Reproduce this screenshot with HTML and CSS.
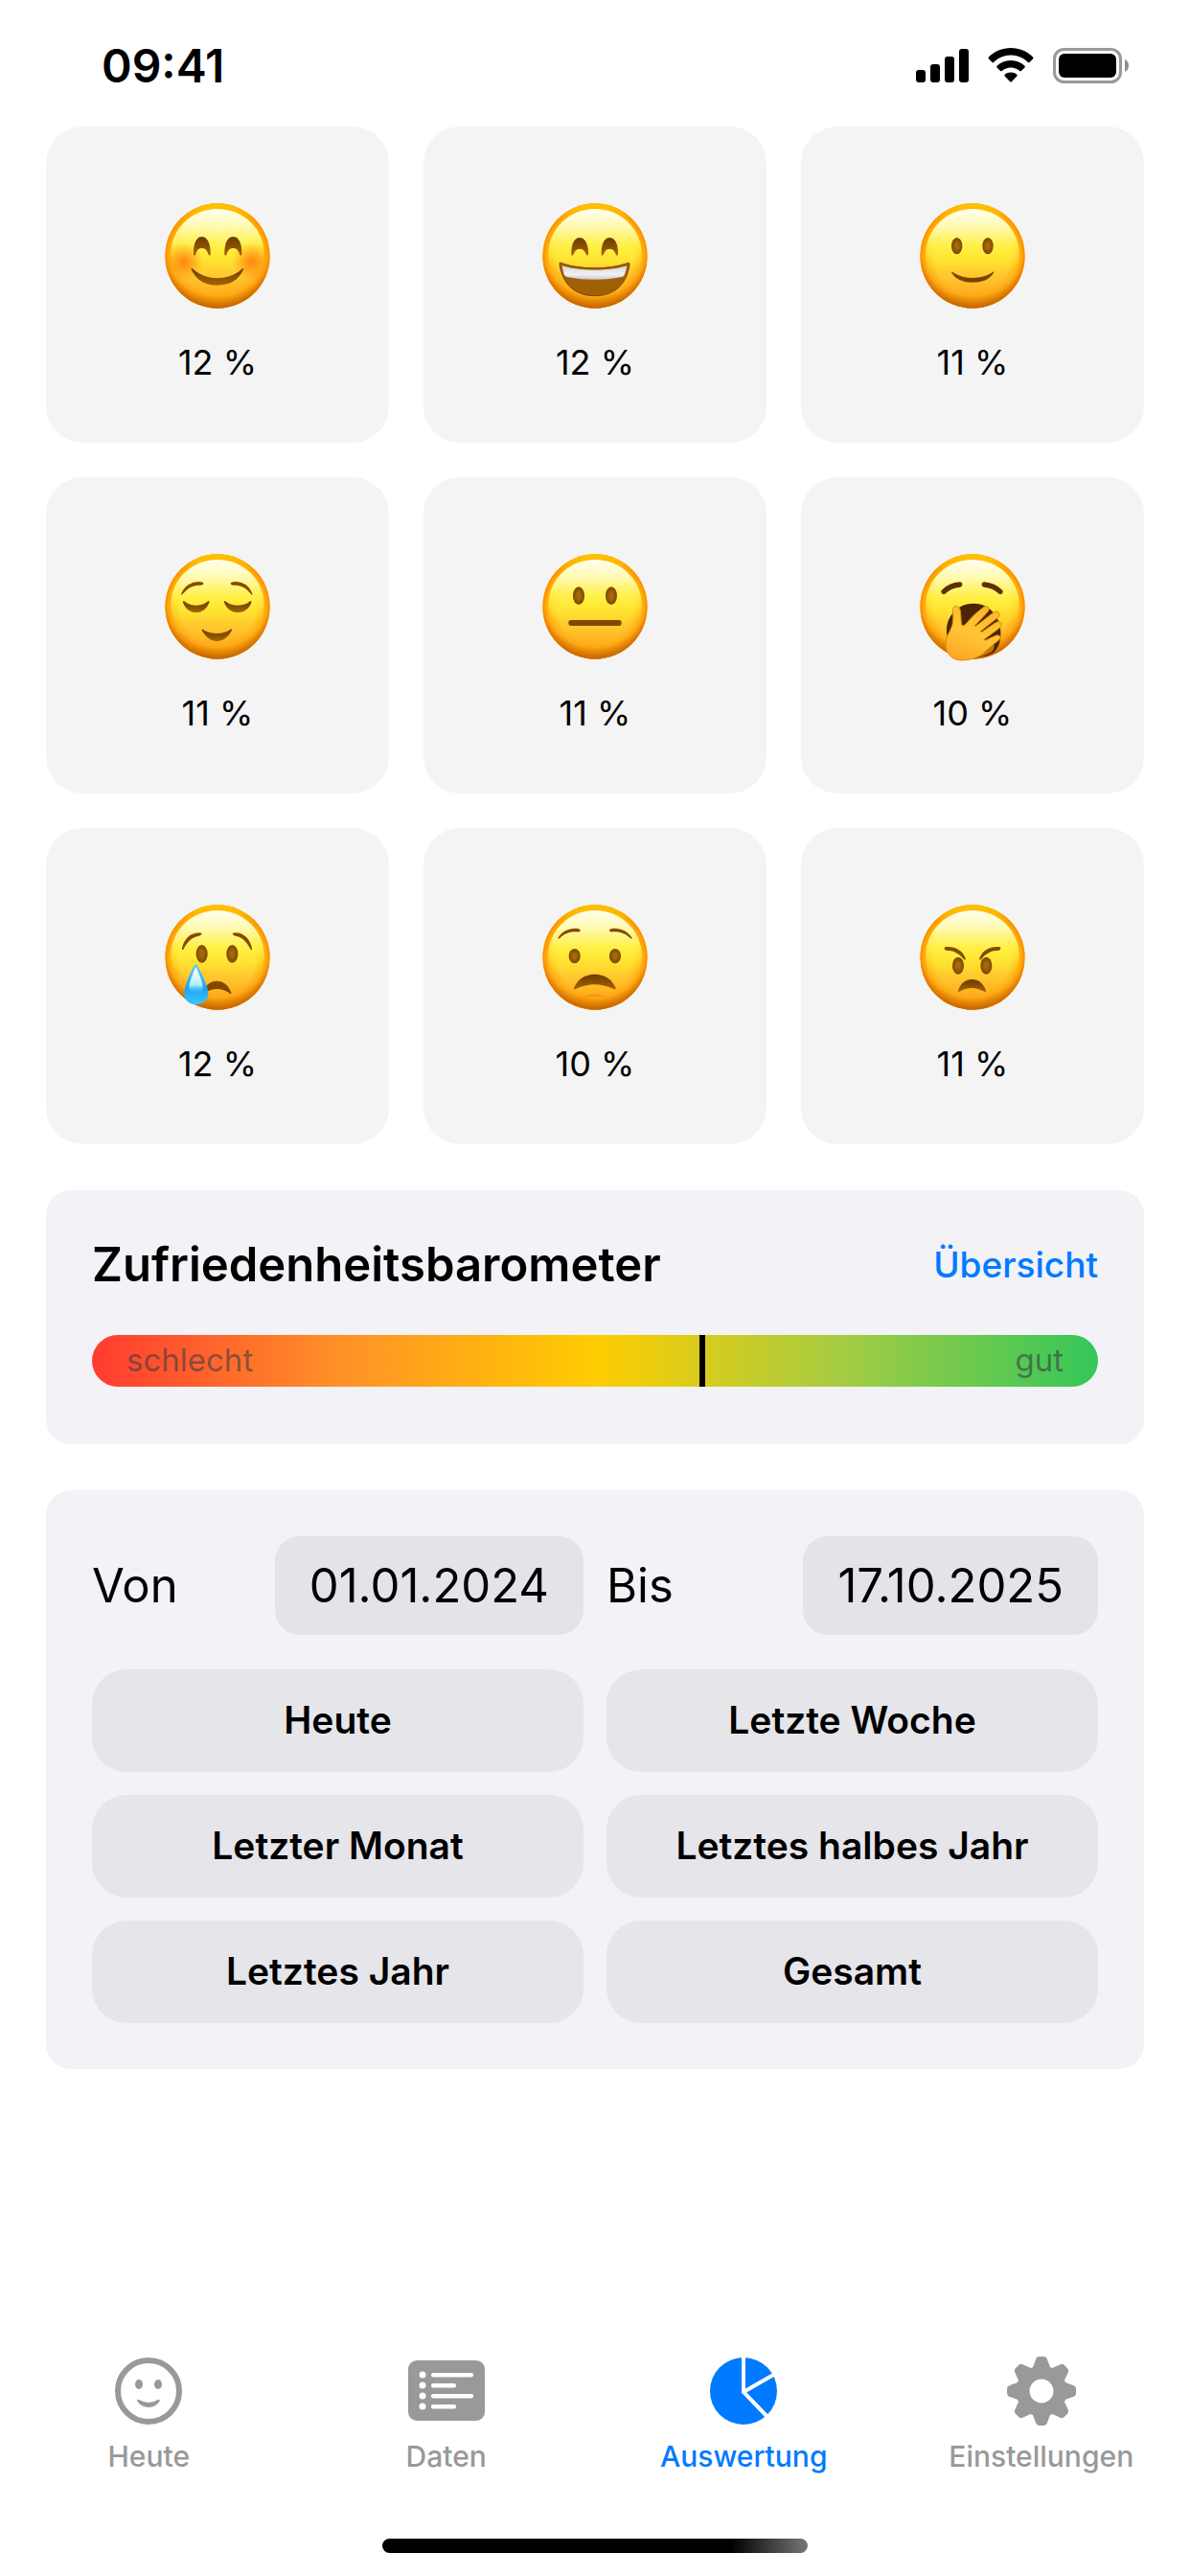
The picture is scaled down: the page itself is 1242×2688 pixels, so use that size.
FILE: index.html
```html
<!DOCTYPE html>
<html lang="de">
<head>
    <meta charset="UTF-8">
    <meta name="viewport" content="width=device-width, initial-scale=1.0">
    <title>Auswertung</title>
    <link rel="stylesheet" href="styles.css">
</head>
<body>
    <!-- Gemeinsame Verläufe und das leere Gesicht -->
    <svg class="vorlagen" width="0" height="0" aria-hidden="true">
        <defs>
            <linearGradient id="haut" x1="0" y1="0" x2="0" y2="1">
                <stop offset="0" stop-color="#ffd400"/>
                <stop offset=".3" stop-color="#ffe01c"/>
                <stop offset=".5" stop-color="#ffe32c"/>
                <stop offset=".7" stop-color="#ffc62e"/>
                <stop offset=".86" stop-color="#ffae1b"/>
                <stop offset="1" stop-color="#f59a10"/>
            </linearGradient>
            <radialGradient id="rand" cx=".5" cy=".5" r=".5">
                <stop offset=".72" stop-color="#ff9500" stop-opacity="0"/>
                <stop offset=".9" stop-color="#ff9500" stop-opacity=".6"/>
                <stop offset="1" stop-color="#fb8c00"/>
            </radialGradient>
            <radialGradient id="schatten" cx=".5" cy=".38" r=".62">
                <stop offset=".82" stop-color="#b85e00" stop-opacity="0"/>
                <stop offset="1" stop-color="#b85e00" stop-opacity=".85"/>
            </radialGradient>
            <linearGradient id="kante" x1="0" y1="0" x2="0" y2="1">
                <stop offset="0" stop-color="#ffc400"/>
                <stop offset=".16" stop-color="#ffd000" stop-opacity="0"/>
            </linearGradient>
            <linearGradient id="glanz" x1="0" y1="0" x2="0" y2="1">
                <stop offset="0" stop-color="#fffef0"/>
                <stop offset=".2" stop-color="#fffab0"/>
                <stop offset=".42" stop-color="#fff24a" stop-opacity=".85"/>
                <stop offset=".7" stop-color="#ffe52e" stop-opacity="0"/>
            </linearGradient>
            <radialGradient id="wange">
                <stop offset="0" stop-color="#ff7a0c" stop-opacity=".9"/>
                <stop offset=".4" stop-color="#ff8a10" stop-opacity=".65"/>
                <stop offset="1" stop-color="#ff9a10" stop-opacity="0"/>
            </radialGradient>
            <linearGradient id="braun" x1="0" y1="0" x2="0" y2="1">
                <stop offset="0" stop-color="#6b3b00"/>
                <stop offset="1" stop-color="#a56405"/>
            </linearGradient>
            <radialGradient id="pupille">
                <stop offset=".3" stop-color="#a5680a"/>
                <stop offset="1" stop-color="#7a4500"/>
            </radialGradient>
            <linearGradient id="zaehne" x1="0" y1="0" x2="0" y2="1">
                <stop offset="0" stop-color="#d4d4da"/>
                <stop offset=".6" stop-color="#f2f2f6"/>
                <stop offset="1" stop-color="#c9c9d0"/>
            </linearGradient>
            <linearGradient id="hand" x1=".7" y1="0" x2=".3" y2="1">
                <stop offset="0" stop-color="#ffb52c"/>
                <stop offset=".5" stop-color="#ffc633"/>
                <stop offset="1" stop-color="#ffa726"/>
            </linearGradient>
            <linearGradient id="traene" x1="0" y1="0" x2="0" y2="1">
                <stop offset="0" stop-color="#5ccbf2"/>
                <stop offset=".6" stop-color="#1ea4f2"/>
                <stop offset="1" stop-color="#3cc4ff"/>
            </linearGradient>
            <linearGradient id="traene-glanz" x1="0" y1="0" x2="0" y2="1">
                <stop offset="0" stop-color="#ffffff"/>
                <stop offset=".65" stop-color="#b4eeff"/>
                <stop offset="1" stop-color="#1fb0ff" stop-opacity="0"/>
            </linearGradient>
            <symbol id="gesicht" viewBox="-168 -168 336 336">
                <circle r="164" fill="url(#haut)"/>
                <circle r="164" fill="url(#rand)"/>
                <circle r="164" fill="url(#schatten)"/>
                <circle r="164" fill="url(#kante)"/>
                <ellipse cy="-6" rx="146" ry="141" fill="url(#glanz)"/>
            </symbol>
        </defs>
    </svg>

    <header class="statusleiste">
        <time class="uhrzeit">09:41</time>
        <div class="status-symbole">
            <svg width="55" height="35" viewBox="0 0 55 35">
                <rect x="0" y="22" width="10" height="13" rx="3"/>
                <rect x="15" y="16" width="10" height="19" rx="3"/>
                <rect x="30" y="8" width="10" height="27" rx="3"/>
                <rect x="45" y="0" width="10" height="35" rx="3"/>
            </svg>
            <svg width="48" height="36" viewBox="0 0 48 36">
                <path d="M24 0C33 0 41 3.500 47 9.500Q48 10.500 47 11.500L43.500 15Q42.700 15.700 41.900 15C37 10.300 31 7.500 24 7.500S11 10.300 6.100 15Q5.300 15.700 4.500 15L1 11.500Q0 10.500 1 9.500C7 3.500 15 0 24 0Z"/>
                <path d="M24 13C29.500 13 34.500 15.200 38.500 18.800Q39.300 19.600 38.500 20.500L34.900 24Q34.100 24.700 33.300 24C30.700 21.700 27.500 20.500 24 20.500S17.300 21.700 14.700 24Q13.900 24.700 13.100 24L9.500 20.500Q8.700 19.600 9.500 18.800C13.500 15.200 18.500 13 24 13Z"/>
                <path d="M24 25.500C26.400 25.500 28.600 26.400 30.300 27.800Q31.100 28.600 30.300 29.500L24.800 35.200Q24 36 23.200 35.200L17.700 29.500Q16.900 28.600 17.700 27.800C19.400 26.400 21.600 25.500 24 25.500Z"/>
            </svg>
            <svg width="79" height="37" viewBox="0 0 79 37">
                <rect x="1.500" y="1.500" width="69" height="34" rx="10" fill="none" stroke="#999" stroke-width="3"/>
                <rect x="6" y="6" width="60" height="25" rx="6"/>
                <path d="M75 12C77.500 13.200 79 15.600 79 18.500S77.500 23.800 75 25Z" fill="#8f8f8f"/>
            </svg>
        </div>
    </header>

    <main class="inhalt">
        <ul class="stimmungen">
            <li class="stimmung">
                <svg class="emoji" viewBox="-168 -168 336 336" role="img" aria-label="Glücklich">
                    <use href="#gesicht" x="-168" y="-168" width="336" height="336"/>
                    <circle cx="-106" cy="19" r="62" fill="url(#wange)"/>
                    <circle cx="107" cy="19" r="62" fill="url(#wange)"/>
                    <path d="M-75-5C-76-38-66-60-49-60S-21-38-22-5C-23 1-27 0-29-6C-33-19-40-24-49-24S-65-19-68-6C-70 0-74 1-75-5ZM22-5C21-38 31-60 49-60S77-38 76-5C75 1 71 0 69-6C65-19 58-24 49-24S33-19 29-6C27 0 23 1 22-5Z" fill="url(#braun)"/>
                    <path d="M-82 42C-84 36-77 40-72 45C-33 78 32 78 72 45C77 40 84 36 81 43C66 77 37 92 0 92S-67 77-82 42Z" fill="url(#braun)"/>
                </svg>
                <span class="prozent">12 %</span>
            </li>
            <li class="stimmung">
                <svg class="emoji" viewBox="-168 -168 336 336" role="img" aria-label="Lachend">
                    <use href="#gesicht" x="-168" y="-168" width="336" height="336"/>
                    <path d="M-74-5C-75-36-65-57-48-57S-20-36-21-5C-22 1-26 0-28-6C-32-17-39-22-48-22S-63-17-67-6C-69 0-73 1-74-5ZM20-5C19-36 29-57 46-57S73-36 72-5C71 1 67 0 65-6C61-17 55-22 46-22S31-17 27-6C25 0 21 1 20-5Z" fill="url(#braun)"/>
                    <path d="M-111 26C-112 20-108 20-101 24C-45 43 43 43 98 24C106 20 109 21 108 28C99 90 60 125-1 125S-102 89-111 26Z" fill="#a06006" stroke="#7d4600" stroke-width="3"/>
                    <path d="M-103 34C-104 30-99 31-95 33C-41 48 39 48 92 33C98 31 101 32 99 38L93 58C91 64 86 66 80 67C28 77-31 77-83 67C-91 65-95 63-97 58Z" fill="url(#zaehne)"/>
                </svg>
                <span class="prozent">12 %</span>
            </li>
            <li class="stimmung">
                <svg class="emoji" viewBox="-168 -168 336 336" role="img" aria-label="Zufrieden">
                    <use href="#gesicht" x="-168" y="-168" width="336" height="336"/>
                    <ellipse cx="-49" cy="-31" rx="17" ry="26" fill="url(#pupille)"/>
                    <ellipse cx="48" cy="-31" rx="17" ry="26" fill="url(#pupille)"/>
                    <path d="M-65 53C-68 48-63 49-59 53C-25 74 26 74 60 53C64 49 69 48 66 53C54 73 31 83 1 83S-53 73-65 53Z" fill="#7a4300"/>
                </svg>
                <span class="prozent">11 %</span>
            </li>
            <li class="stimmung">
                <svg class="emoji" viewBox="-168 -168 336 336" role="img" aria-label="Entspannt">
                    <use href="#gesicht" x="-168" y="-168" width="336" height="336"/>
                    <path d="M-113-41C-104-64-83-78-57-78Q-41-78-45-70Q-48-66-59-67C-79-66-94-58-107-41Q-116-33-113-41ZM109-41C100-64 82-78 55-78Q39-78 42-70Q45-66 56-67C76-66 90-58 103-41Q112-33 109-41Z" fill="#844b00"/>
                    <path d="M-108-13C-110-19-104-18-99-13C-79-1-54-1-35-13C-29-18-23-19-26-13C-34 7-48 18-67 18S-100 7-108-13ZM21-13C18-19 24-18 30-13C50-1 77-1 97-13C103-18 108-19 106-13C99 7 84 18 64 18S29 7 21-13Z" fill="url(#braun)"/>
                    <path d="M-48 76C-51 70-46 69-42 74C-15 87 12 87 37 74C42 69 47 70 44 76C32 98 16 108-2 108S-35 98-48 76Z" fill="url(#braun)"/>
                </svg>
                <span class="prozent">11 %</span>
            </li>
            <li class="stimmung">
                <svg class="emoji" viewBox="-168 -168 336 336" role="img" aria-label="Neutral">
                    <use href="#gesicht" x="-168" y="-168" width="336" height="336"/>
                    <ellipse cx="-51" cy="-34" rx="18" ry="28" fill="url(#pupille)"/>
                    <ellipse cx="51" cy="-34" rx="18" ry="28" fill="url(#pupille)"/>
                    <rect x="-83" y="42" width="166" height="18" rx="8" fill="#804700"/>
                </svg>
                <span class="prozent">11 %</span>
            </li>
            <li class="stimmung">
                <svg class="emoji" viewBox="-168 -168 336 336" role="img" aria-label="Müde">
                    <use href="#gesicht" x="-168" y="-168" width="336" height="336"/>
                    <path d="M-90-47Q-70-67-40-69M37-69Q67-66 87-47" fill="none" stroke="#5c3108" stroke-width="16" stroke-linecap="round"/>
                    <path d="M3-10C52-10 87 30 88 78C90 112 78 136 62 146C32 162-22 164-52 140C-70 124-82 100-81 72C-79 26-44-10 3-10Z" fill="#4a2603"/>
                    <path d="M-38 149L62 104C70 118 70 130 60 142C34 158 2 162-20 160Z" fill="#c87503"/>
                    <!-- Hand vor dem Mund -->
                    <path d="M-62 10C-63-4-43-5-39 9C-35 28-37 44-34 56C-30 63-24 58-18 51C-2 32 18 13 36 1C48-6 57 6 48 16L8 59L9 62L66 18C79 9 91 23 80 34L25 77L28 80L74 49C88 42 97 56 86 66L36 103L39 106L74 90C88 87 92 98 80 107C60 121 49 132 36 144C18 160-8 168-36 168C-66 167-83 146-84 118C-84 92-69 78-63 56C-59 38-61 25-62 10Z" fill="url(#hand)" stroke="#e08a0a" stroke-width="3"/>
                </svg>
                <span class="prozent">10 %</span>
            </li>
            <li class="stimmung">
                <svg class="emoji" viewBox="-168 -168 336 336" role="img" aria-label="Traurig">
                    <use href="#gesicht" x="-168" y="-168" width="336" height="336"/>
                    <path d="M-111-28C-106-56-86-76-60-77Q-47-77-50-72Q-52-68-62-66C-82-61-95-47-105-28Q-112-19-111-28ZM108-28C102-56 84-76 58-77Q45-77 48-72Q50-68 60-66C80-61 92-47 102-28Q109-19 108-28Z" fill="#844b00"/>
                    <ellipse cx="-49" cy="-11" rx="18" ry="28" fill="url(#pupille)"/>
                    <ellipse cx="46" cy="-11" rx="18" ry="28" fill="url(#pupille)"/>
                    <path d="M-47 110C-38 86-22 74-2 74S34 86 43 110C44 116 40 115 36 111C12 95-15 95-40 111C-45 115-49 116-47 110Z" fill="#824800"/>
                    <path d="M-68 21C-62 23-29 90-29 112C-29 134-46 148-67 148S-105 134-105 112C-105 90-75 24-68 21Z" fill="url(#traene)"/>
                    <path d="M-68 30C-63 36-46 78-46 93C-46 108-55 116-67 116S-89 108-89 93C-89 78-72 36-68 30Z" fill="url(#traene-glanz)"/>
                </svg>
                <span class="prozent">12 %</span>
            </li>
            <li class="stimmung">
                <svg class="emoji" viewBox="-168 -168 336 336" role="img" aria-label="Besorgt">
                    <use href="#gesicht" x="-168" y="-168" width="336" height="336"/>
                    <path d="M-116-61C-104-82-82-92-58-91Q-42-89-47-82Q-49-79-58-80C-80-80-95-75-108-62Q-117-54-116-61ZM116-61C104-82 82-92 57-91Q41-89 46-82Q48-79 57-80C79-80 95-75 108-62Q117-54 116-61Z" fill="#844b00"/>
                    <ellipse cx="-64" cy="-4" rx="18" ry="23" fill="url(#pupille)"/>
                    <ellipse cx="63" cy="-4" rx="18" ry="23" fill="url(#pupille)"/>
                    <path d="M-66 96C-54 67-31 53-1 53S53 67 65 96C66 101 63 101 57 98C18 80-20 80-59 98C-65 101-67 101-66 96Z" fill="url(#braun)"/>
                    <path d="M-46 127Q0 104 46 127Q0 116-46 127Z" fill="#f08700" opacity=".6"/>
                </svg>
                <span class="prozent">10 %</span>
            </li>
            <li class="stimmung">
                <svg class="emoji" viewBox="-168 -168 336 336" role="img" aria-label="Wütend">
                    <use href="#gesicht" x="-168" y="-168" width="336" height="336"/>
                    <path d="M-83-33C-53-35-31-21-22 2Q-21 11-27 6C-42-12-58-22-82-22Q-89-23-88-29Q-87-33-83-33ZM83-33C53-35 31-21 22 2Q21 11 27 6C42-12 58-22 82-22Q89-23 88-29Q87-33 83-33Z" fill="#844b00"/>
                    <ellipse cx="-45" cy="26" rx="18" ry="27" fill="url(#pupille)"/>
                    <ellipse cx="43" cy="26" rx="18" ry="27" fill="url(#pupille)"/>
                    <path d="M-45 104C-37 81-22 69-2 69S34 81 42 104C43 109 39 108 35 106C11 93-14 93-38 106C-43 109-46 109-45 104Z" fill="url(#braun)"/>
                </svg>
                <span class="prozent">11 %</span>
            </li>
        </ul>

        <section class="karte barometer">
            <div class="karten-kopf">
                <h2>Zufriedenheitsbarometer</h2>
                <a href="#uebersicht">Übersicht</a>
            </div>
            <div class="skala">
                <span>schlecht</span>
                <span>gut</span>
                <div class="zeiger" style="left: 60.4%;"></div>
            </div>
        </section>

        <section class="karte">
            <div class="zeitraum">
                <div class="datum">
                    <label for="von">Von</label>
                    <input type="text" id="von" value="01.01.2024" size="10">
                </div>
                <div class="datum">
                    <label for="bis">Bis</label>
                    <input type="text" id="bis" value="17.10.2025" size="10">
                </div>
            </div>
            <div class="auswahl">
                <button type="button">Heute</button>
                <button type="button">Letzte Woche</button>
                <button type="button">Letzter Monat</button>
                <button type="button">Letztes halbes Jahr</button>
                <button type="button">Letztes Jahr</button>
                <button type="button">Gesamt</button>
            </div>
        </section>
    </main>

    <nav class="tableiste">
        <a class="tab" href="#heute">
            <svg width="72" height="72" viewBox="-36 -36 72 72" fill="currentColor">
                <circle r="32" fill="none" stroke="currentColor" stroke-width="6"/>
                <ellipse cx="-10" cy="-7" rx="4" ry="5"/>
                <ellipse cx="10" cy="-7" rx="4" ry="5"/>
                <path d="M-12 10Q-12 8.500-10 9Q0 15 10 9Q12 8.500 12 10Q8 17 0 17T-12 10Z"/>
            </svg>
            Heute
        </a>
        <a class="tab" href="#daten">
            <svg width="80" height="72" viewBox="0 0 80 72" fill="currentColor">
                <rect y="4" width="80" height="63" rx="9"/>
                <g fill="#fff">
                    <circle cx="15" cy="19" r="3.500"/>
                    <circle cx="15" cy="30" r="3.500"/>
                    <circle cx="15" cy="41" r="3.500"/>
                    <circle cx="15" cy="52" r="3.500"/>
                    <rect x="24" y="17" width="44" height="4.500" rx="2"/>
                    <rect x="24" y="28" width="26" height="4.500" rx="2"/>
                    <rect x="24" y="39" width="44" height="4.500" rx="2"/>
                    <rect x="24" y="50" width="26" height="4.500" rx="2"/>
                </g>
            </svg>
            Daten
        </a>
        <a class="tab aktiv" href="#auswertung">
            <svg width="72" height="72" viewBox="-36 -36 72 72" fill="currentColor">
                <circle r="35"/>
                <path d="M0-37V1L26 28M0 1L33-18" fill="none" stroke="#fff" stroke-width="4"/>
            </svg>
            Auswertung
        </a>
        <a class="tab" href="#einstellungen">
            <svg width="72" height="72" viewBox="-36 -36 72 72" fill="currentColor">
                <defs>
                    <path id="zahn" d="M-10-22L-6-33Q-5-36-2-36H2Q5-36 6-33L10-22Z"/>
                </defs>
                <circle r="19.500" fill="none" stroke="currentColor" stroke-width="14"/>
                <use href="#zahn"/>
                <use href="#zahn" transform="rotate(45)"/>
                <use href="#zahn" transform="rotate(90)"/>
                <use href="#zahn" transform="rotate(135)"/>
                <use href="#zahn" transform="rotate(180)"/>
                <use href="#zahn" transform="rotate(225)"/>
                <use href="#zahn" transform="rotate(270)"/>
                <use href="#zahn" transform="rotate(315)"/>
            </svg>
            Einstellungen
        </a>
    </nav>
    <div class="home-balken"></div>
</body>
</html>
```

FILE: styles.css
```css
* {
    box-sizing: border-box;
}
body {
    margin: 0;
    min-height: 100vh;
    display: flex;
    flex-direction: column;
    background: #fff;
    color: #000;
    font-family: Inter, "Liberation Sans", sans-serif;
    font-size: 36px;
}
.vorlagen {
    position: absolute;
}

/* Statusleiste */
.statusleiste {
    display: flex;
    align-items: center;
    justify-content: space-between;
    height: 132px;
    padding: 4px 64px 0 106px;
}
.uhrzeit {
    font-size: 48px;
    font-weight: 600;
}
.status-symbole {
    display: flex;
    align-items: center;
    gap: 20px;
}

.inhalt {
    display: flex;
    flex-direction: column;
    gap: 48px;
    padding: 0 48px;
}

/* Kacheln mit den Stimmungen */
.stimmungen {
    display: grid;
    grid-template-columns: repeat(3, 1fr);
    gap: 36px;
    margin: 0;
    padding: 0;
    list-style: none;
}
.stimmung {
    display: flex;
    flex-direction: column;
    align-items: center;
    gap: 31px;
    height: 330px;
    padding-top: 79px;
    background: #f4f4f4;
    border-radius: 38px;
}
.emoji {
    width: 112px;
    height: 112px;
    overflow: visible;
}
.prozent {
    line-height: 48px;
}

/* Karten */
.karte {
    padding: 48px;
    background: #f2f2f7;
    border-radius: 26px;
}
.barometer {
    padding-bottom: 60px;
}
.karten-kopf {
    display: flex;
    align-items: center;
    justify-content: space-between;
    margin-bottom: 43px;
    line-height: 60px;
}
.karten-kopf h2 {
    margin: 0;
    font-size: 49px;
    font-weight: 600;
}
.karten-kopf a {
    color: #007aff;
    font-size: 37px;
    font-weight: 500;
    text-decoration: none;
}
.skala {
    position: relative;
    display: flex;
    align-items: center;
    justify-content: space-between;
    height: 54px;
    padding: 0 36px 2px;
    border-radius: 27px;
    background: linear-gradient(to right, #ff3b30, #ff9227 25%, #ffcc00 50%, #a3cc44 75%, #34c759);
    color: rgba(60, 60, 67, 0.6);
    font-size: 33px;
}
.zeiger {
    position: absolute;
    top: 0;
    width: 6px;
    height: 100%;
    background: #000;
}

/* Zeitraum */
.zeitraum, .auswahl {
    display: grid;
    grid-template-columns: 1fr 1fr;
    gap: 24px;
}
.zeitraum {
    margin-bottom: 36px;
    font-size: 49px;
}
.datum {
    display: flex;
    align-items: center;
    justify-content: space-between;
}
.datum input {
    field-sizing: content;
    height: 103px;
    padding: 0 36px;
    border: none;
    border-radius: 26px;
    background: #e4e3e9;
    color: #000;
    font: inherit;
}
.auswahl button {
    height: 107px;
    padding: 0 24px 2px;
    border: none;
    border-radius: 36px;
    background: #e5e5ea;
    color: #000;
    font-family: inherit;
    font-size: 39px;
    font-weight: 600;
    cursor: pointer;
}

/* Tableiste unten */
.tableiste {
    display: grid;
    grid-template-columns: repeat(4, 1fr);
    margin-top: auto;
}
.tab {
    display: flex;
    flex-direction: column;
    align-items: center;
    gap: 14px;
    color: #999;
    font-size: 30px;
    font-weight: 500;
    line-height: 36px;
    text-decoration: none;
}
.aktiv {
    color: #007aff;
}
.home-balken {
    width: 444px;
    height: 15px;
    margin: 68px auto 24px;
    border-radius: 8px;
    background: linear-gradient(to right, #000 82%, #777);
}
```
